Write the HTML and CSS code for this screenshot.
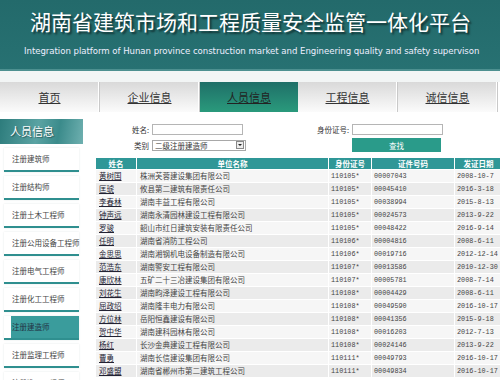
FILE: index.html
```html
<!DOCTYPE html>
<html lang="zh-CN">
  <head>
    <meta charset="UTF-8" />
    <title>湖南省建筑市场和工程质量安全监管一体化平台</title>
    <link rel="stylesheet" href="styles.css">
  </head>
  <body>
    <div class="banner">
      <h1>湖南省建筑市场和工程质量安全监管一体化平台</h1>
      <p>Integration platform of Hunan province construction market and Engineering quality and safety supervison</p>
    </div>
    <div class="strip"></div>

    <ul class="menu">
      <li><a href="#">首页</a></li>
      <li><a href="#">企业信息</a></li>
      <li class="active"><a href="#">人员信息</a></li>
      <li><a href="#">工程信息</a></li>
      <li><a href="#">诚信信息</a></li>
    </ul>

    <div class="main">
      <div class="side">
        <div class="side-title">人员信息</div>
        <ul class="side-list">
          <li>注册建筑师</li>
          <li>注册结构师</li>
          <li>注册土木工程师</li>
          <li>注册公用设备工程师</li>
          <li>注册电气工程师</li>
          <li>注册化工工程师</li>
          <li class="active">注册建造师</li>
          <li>注册监理工程师</li>
          <li>注册造价工程师</li>
        </ul>
      </div>

      <div class="content">
        <form class="search">
          <label for="name">姓名:</label>
          <input type="text" id="name" />
          <label for="idno">身份证号:</label>
          <input type="text" id="idno" />
          <label for="kind">类别</label>
          <div class="select">
            <span>二级注册建造师</span>
            <i class="arrow"></i>
          </div>
          <span></span>
          <button type="button">查找</button>
        </form>

        <table class="list">
          <thead>
            <tr>
              <th class="c1">姓名</th>
              <th class="c2">单位名称</th>
              <th class="c3">身份证号</th>
              <th class="c4">证件号码</th>
              <th class="c5">发证日期</th>
            </tr>
          </thead>
          <tbody id="rows"></tbody>
        </table>
      </div>
    </div>

    <script>
      const people = [
        ["黄树国", "株洲芙蓉建设集团有限公司", "110105*", "00007043", "2008-10-7"],
        ["匡琥", "攸县第二建筑有限责任公司", "110105*", "00045410", "2016-3-18"],
        ["李春林", "湖南丰益工程有限公司", "110105*", "00038994", "2015-8-13"],
        ["钟声远", "湖南永清园林建设工程有限公司", "110105*", "00024573", "2013-9-22"],
        ["罗骏", "韶山市红日建筑安装有限责任公司", "110105*", "00048422", "2016-9-14"],
        ["任明", "湖南省消防工程公司", "110106*", "00004816", "2008-6-11"],
        ["金思思", "湖南湘钢机电设备制造有限公司", "110106*", "00019716", "2012-12-14"],
        ["范浩东", "湖南警安工程有限公司", "110107*", "00013586", "2010-12-30"],
        ["康欣林", "五矿二十三冶建设集团有限公司", "110107*", "00005781", "2008-7-14"],
        ["刘花生", "湖南畇泽建设工程有限公司", "110108*", "00004429", "2008-6-11"],
        ["屈政绍", "湖南隆丰电力有限公司", "110108*", "00049590", "2016-10-17"],
        ["方位林", "岳阳恒鑫建设有限公司", "110108*", "00041356", "2015-9-18"],
        ["贺中华", "湖南建科园林有限公司", "110108*", "00016203", "2012-7-13"],
        ["杨红", "长沙金典建设工程有限公司", "110108*", "00024146", "2013-9-22"],
        ["曹勇", "湖南长信建设集团有限公司", "110111*", "00049793", "2016-10-17"],
        ["邓盛盟", "湖南省郴州市第二建筑工程公司", "110111*", "00049834", "2016-10-17"],
      ];

      const tbody = document.getElementById("rows");
      people.forEach((p) => {
        const tr = document.createElement("tr");
        tr.innerHTML =
          '<td><a href="#">' + p[0] + "</a></td>" +
          "<td>" + p[1] + "</td>" +
          "<td>" + p[2] + "</td>" +
          "<td>" + p[3] + "</td>" +
          "<td>" + p[4] + "</td>";
        tbody.appendChild(tr);
      });
    </script>
  </body>
</html>
```

FILE: styles.css
```css
body {
  margin: 0;
  width: 500px;
  height: 380px;
  overflow: hidden;
  background: #fff;
  font-family: "Noto Sans CJK SC", "Liberation Sans", sans-serif;
  color: #333;
}

ul {
  list-style: none;
  margin: 0;
  padding: 0;
}

.banner {
  height: 71px;
  background: linear-gradient(#236a6b, #277172);
  border-bottom: 2px solid #4d9090;
  padding-left: 30px;
  box-sizing: border-box;
  padding-top: 6px;
}

.banner h1 {
  margin: 0;
  font-size: 21px;
  font-weight: normal;
  line-height: 30px;
  color: #fff;
  text-shadow: 2px 2px 2px rgba(0, 0, 0, 0.55);
  white-space: nowrap;
}

.banner p {
  margin: 10px 0 0 -6px;
  font-family: "DejaVu Sans", sans-serif;
  font-size: 8.6px;
  color: #eef;
  white-space: nowrap;
  letter-spacing: -0.05px;
}

.strip {
  height: 11px;
  background: #f2f5f5;
}

.menu {
  display: flex;
  height: 30px;
  width: 498px;
  background: linear-gradient(#d9d9d9, #fbfbfb);
}

.menu li {
  width: 99px;
  border-right: 1px solid #c9c9c9;
  box-shadow: inset -1px 0 0 #fff;
  display: flex;
  align-items: center;
  justify-content: center;
}

.menu a {
  color: #333;
  font-size: 11px;
  text-decoration: underline;
}

.menu li.active {
  background: linear-gradient(#1f6f68, #2a9a7c);
  border-right: none;
  box-shadow: none;
  width: 98px;
}

.menu li.active a {
  color: #222;
}

.main {
  display: flex;
  margin-top: 7px;
}

.side {
  width: 84px;
  flex-shrink: 0;
}

.side-title {
  height: 25px;
  line-height: 25px;
  width: 83px;
  padding-left: 10px;
  box-sizing: border-box;
  color: #fff;
  font-size: 11px;
  background: linear-gradient(100deg, #2d7c7c 0%, #5aa3a3 45%, #3b8b8b 70%, #6fb0b0 100%);
  text-shadow: 1px 1px 1px rgba(0, 0, 0, 0.4);
}

.side-list {
  padding-left: 4px;
}

.side-list li {
  width: 67px;
  height: 22px;
  line-height: 22px;
  margin-top: 4px;
  padding-left: 8px;
  background: #fff;
  border-bottom: 2px solid #2f8f8f;
  font-size: 7.5px;
  color: #444;
  white-space: nowrap;
  box-shadow: 0 0 2px #e4e8e8;
}

.side-list li.active {
  background: linear-gradient(to right, #fff 7px, #3a9c9c 7px);
  color: #234;
}

.content {
  margin-left: 11px;
  width: 402px;
}

.search {
  display: grid;
  grid-template-columns: 57px 102px 98px 91px;
  row-gap: 3px;
  align-items: center;
  padding-top: 5px;
  font-size: 7.5px;
}

.search label {
  text-align: right;
  padding-right: 3px;
}

.search input {
  width: 91px;
  height: 11px;
  box-sizing: border-box;
  border: 1px solid #b5b5b5;
  padding: 0;
  margin: 0;
}

.select {
  width: 94px;
  height: 11px;
  box-sizing: border-box;
  border: 1px solid #a8a8a8;
  display: flex;
  align-items: center;
  justify-content: space-between;
  padding-left: 2px;
  font-size: 7.5px;
  background: #fff;
}

.arrow {
  width: 8px;
  height: 8px;
  margin-right: 1px;
  background: #ececec;
  border: 1px solid #888;
  box-sizing: border-box;
  position: relative;
}

.arrow::after {
  content: "";
  position: absolute;
  left: 1px;
  top: 2px;
  border-left: 2px solid transparent;
  border-right: 2px solid transparent;
  border-top: 2px solid #222;
}

.search button {
  width: 89px;
  height: 14px;
  border: none;
  background: #2a9b8a;
  color: #fff;
  font-family: inherit;
  font-size: 7.5px;
  padding: 0;
}

.list {
  margin-top: 6px;
  width: 402px;
  border-collapse: collapse;
  table-layout: fixed;
  font-size: 7.5px;
}

.list th {
  background: #2f9797;
  color: #fff;
  font-weight: bold;
  height: 11px;
  padding: 0;
  border: 1px solid #fff;
  border-top: none;
}

.c1 { width: 40px; }
.c2 { width: 191px; }
.c3 { width: 42px; }
.c4 { width: 82px; }
.c5 { width: 47px; }

.list td {
  height: 12px;
  padding: 0 0 0 3px;
  border: 1px solid #fff;
  background: #f6f6f6;
  color: #444;
  white-space: nowrap;
  overflow: hidden;
  line-height: 12px;
}

.list tr:nth-child(even) td {
  background: #ebebeb;
}

.list td:nth-child(n+3) {
  font-family: "Liberation Mono", monospace;
  font-size: 6.8px;
  padding-left: 2px;
}

.list td a {
  color: #223;
  text-decoration: underline;
}
```
